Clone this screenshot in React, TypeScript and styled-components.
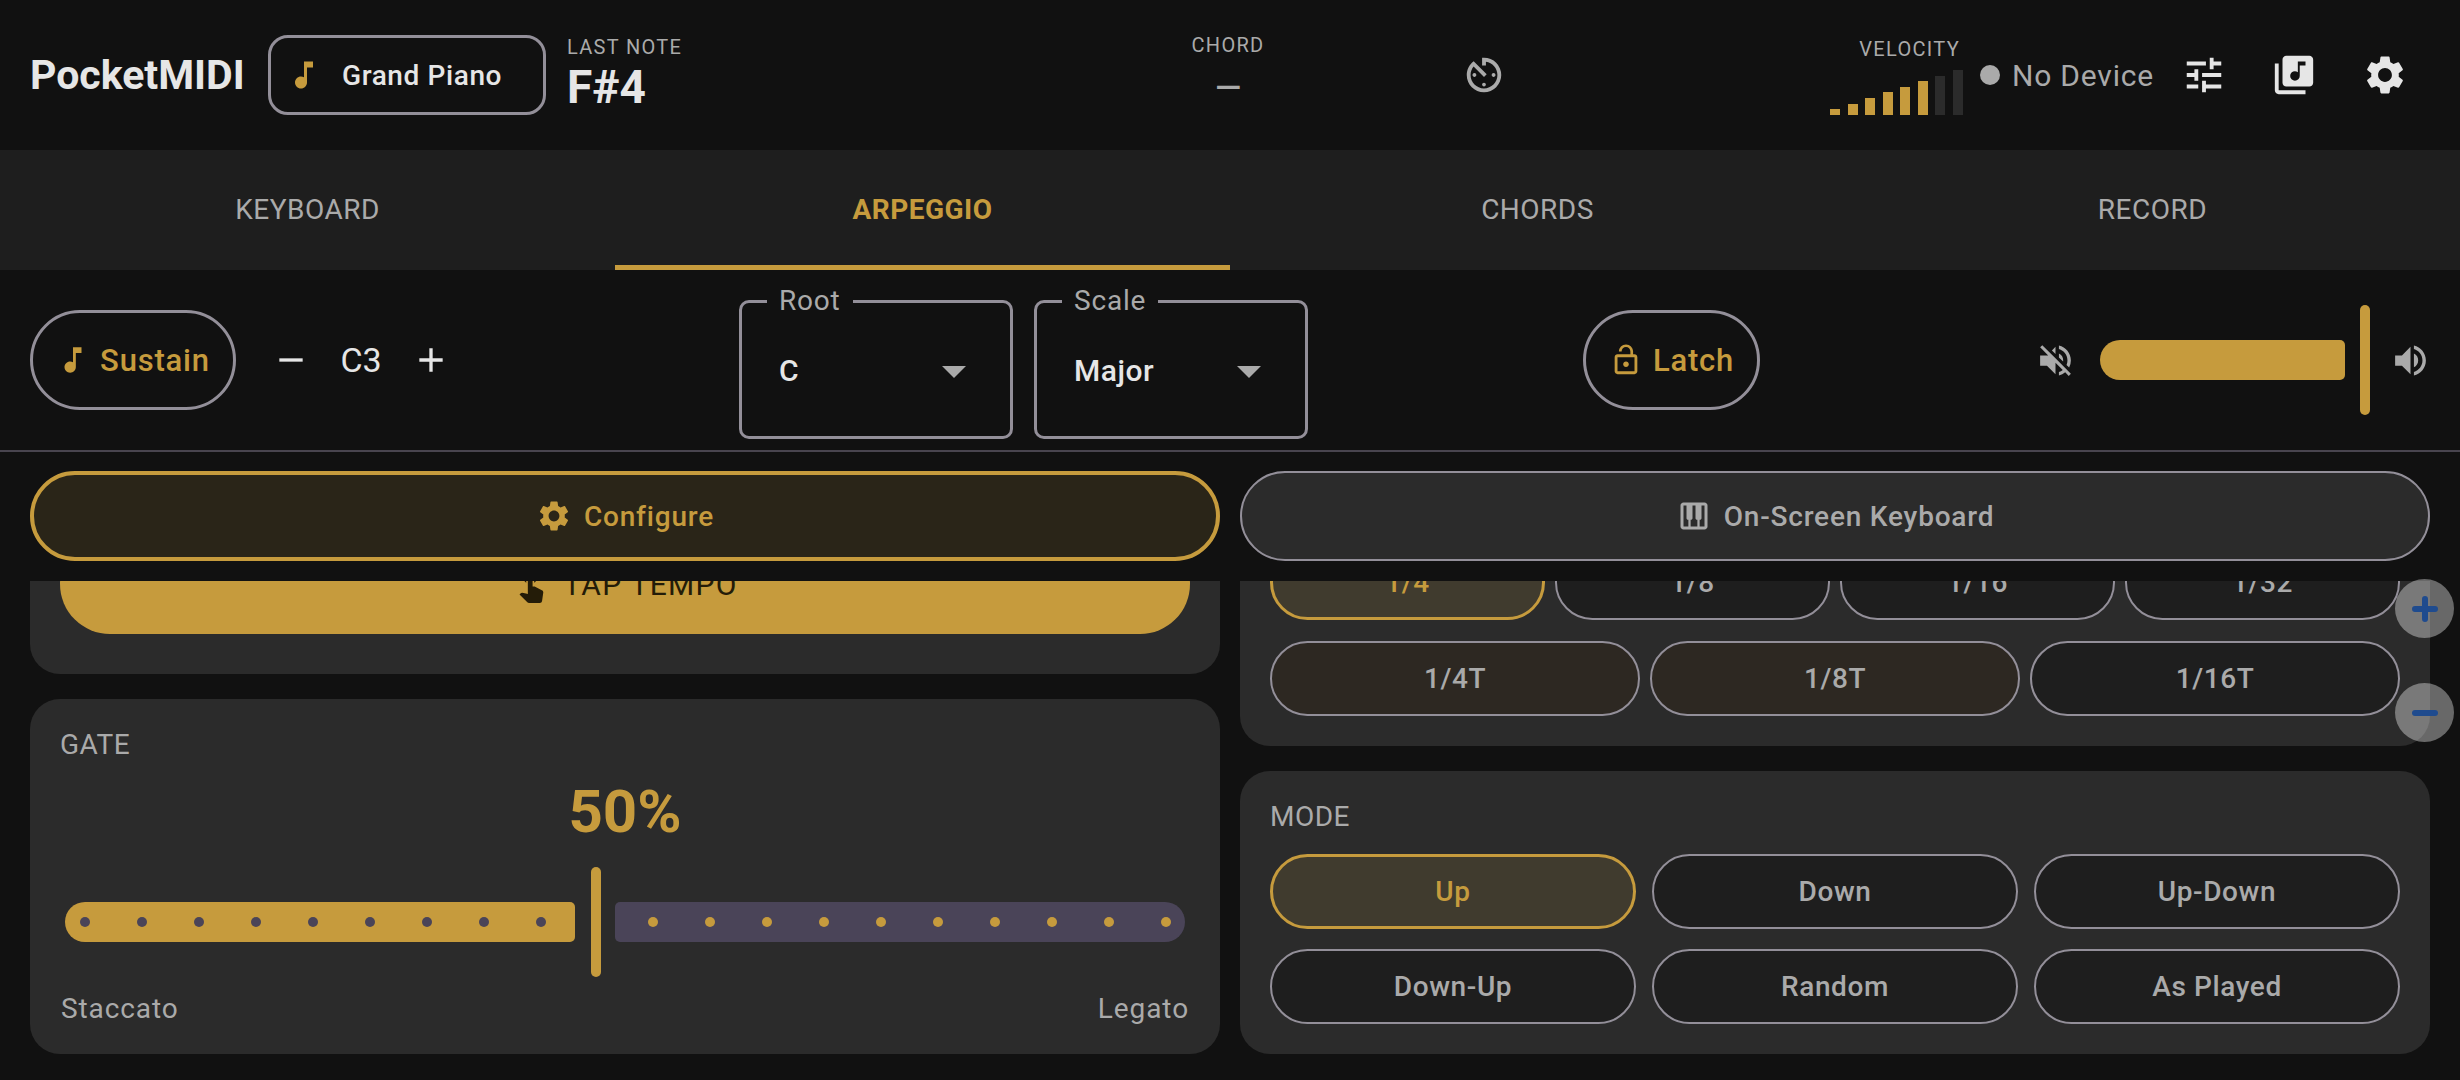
import React from "react";
import styled, { createGlobalStyle } from "styled-components";
import {
  MdAdd, MdAvTimer, MdLibraryMusic, MdLockOpen, MdMusicNote, MdPiano, MdRemove,
  MdSettings, MdTouchApp, MdTune, MdVolumeOff, MdVolumeUp,
} from "react-icons/md";

const gold = "#c69b3d";
const muted = "#aaaaaa";
const light = "#e6e6e6";
const outline = "#938f99";

const Global = createGlobalStyle`
  * { box-sizing: border-box; }
  html, body { margin: 0; padding: 0; background: #111111; overflow: hidden; }
  body { font-family: Roboto, "Liberation Sans", sans-serif; }
  button { font-family: inherit; padding: 0; margin: 0; cursor: pointer; }
`;

const Page = styled.div`
  position: relative;
  width: 2460px;
  height: 1080px;
  display: flex;
  flex-direction: column;
  overflow: hidden;
  background: #111111;
  color: ${light};
`;

/* ---------- top bar ---------- */
const TopBar = styled.header`
  height: 150px;
  flex: none;
  display: flex;
  align-items: center;
  padding: 0 30px;
`;
const Brand = styled.div`
  width: 210px;
  flex: none;
  font-size: 41px;
  font-weight: 700;
  color: ${light};
  margin-right: 28px;
  white-space: nowrap;
`;
const PresetButton = styled.button`
  width: 278px;
  height: 80px;
  flex: none;
  display: flex;
  align-items: center;
  gap: 20px;
  padding-left: 15px;
  border-radius: 20px;
  border: 3px solid ${outline};
  background: transparent;
  color: ${light};
  font-size: 28px;
  font-weight: 480;
  letter-spacing: 0.6px;
  svg { color: ${gold}; flex: none; }
`;
const NoteReadout = styled.div`
  flex: 0 0 561px;
  margin-left: 21px;
  display: flex;
  flex-direction: column;
  margin-top: -3px;
`;
const MiniLabel = styled.div`
  font-size: 20px;
  line-height: 24px;
  letter-spacing: 1.3px;
  color: ${muted};
  white-space: nowrap;
`;
const VelocityLabel = styled(MiniLabel)`
  margin-right: 2px;
`;
const NoteValue = styled.div`
  font-size: 46px;
  line-height: 50px;
  font-weight: 700;
  color: ${light};
  margin-top: 3px;
`;
const ChordReadout = styled.div`
  flex: 0 0 200px;
  display: flex;
  flex-direction: column;
  align-items: center;
  margin-top: -7px;
`;
const ChordValue = styled.div`
  font-size: 34px;
  line-height: 46px;
  font-weight: 500;
  color: ${muted};
  margin-top: 7px;
`;
const TimerSlot = styled.div`
  margin-left: 133px;
  color: ${muted};
  display: flex;
`;
const VelocityBlock = styled.div`
  margin-left: 323px;
  width: 132px;
  margin-top: 2px;
  display: flex;
  flex-direction: column;
  align-items: flex-end;
`;
const Bars = styled.div`
  width: 132px;
  height: 45px;
  margin-top: 9px;
  display: flex;
  align-items: flex-end;
  gap: 7.5px;
`;
const Bar = styled.div<{ $on: boolean; $h: number }>`
  width: 10px;
  flex: none;
  height: ${(p) => p.$h}px;
  background: ${(p) => (p.$on ? gold : "#2b2b2b")};
`;
const DeviceStatus = styled.div`
  margin-left: 18px;
  display: flex;
  align-items: center;
  gap: 12px;
  font-size: 30px;
  letter-spacing: 0.8px;
  color: ${muted};
  white-space: nowrap;
`;
const Dot = styled.span`
  width: 20px;
  height: 20px;
  border-radius: 50%;
  background: ${muted};
`;
const IconRow = styled.div`
  margin-left: auto;
  display: flex;
`;
const IconButton = styled.button`
  width: 90.5px;
  height: 90px;
  border: 0;
  background: transparent;
  color: ${light};
  display: flex;
  align-items: center;
  justify-content: center;
`;

/* ---------- tabs ---------- */
const Tabs = styled.nav`
  height: 120px;
  flex: none;
  display: grid;
  grid-template-columns: repeat(4, 1fr);
  background: #1e1e1e;
`;
const Tab = styled.button<{ $active?: boolean }>`
  border: 0;
  background: transparent;
  font-size: 28px;
  letter-spacing: 0.5px;
  font-weight: ${(p) => (p.$active ? 700 : 400)};
  color: ${(p) => (p.$active ? gold : muted)};
  border-bottom: 5px solid ${(p) => (p.$active ? gold : "transparent")};
  padding-top: 3px;
`;

/* ---------- toolbar ---------- */
const Toolbar = styled.section`
  height: 180px;
  flex: none;
  display: flex;
  align-items: center;
  padding: 0 30px;
`;
const PillToggle = styled.button<{ $width: number; $gap: number }>`
  width: ${(p) => p.$width}px;
  height: 100px;
  flex: none;
  border-radius: 50px;
  border: 3px solid ${outline};
  background: transparent;
  color: ${gold};
  font-size: 31px;
  font-weight: 480;
  letter-spacing: 0.8px;
  display: flex;
  align-items: center;
  justify-content: center;
  gap: ${(p) => p.$gap}px;
  svg { flex: none; }
`;
const LatchSlot = styled.div`
  margin-left: 275px;
`;
const Stepper = styled.div`
  margin-left: 35px;
  display: flex;
  align-items: center;
  gap: 20px;
  color: ${light};
`;
const OctaveValue = styled.span`
  width: 60px;
  text-align: center;
  font-size: 34px;
`;
const Fields = styled.div`
  margin-left: 288px;
  margin-top: 10px;
  display: flex;
  gap: 21px;
`;
const Field = styled.fieldset`
  width: 274px;
  height: 148px;
  margin: 0;
  padding: 0;
  border: 3px solid ${outline};
  border-radius: 10px;
`;
const FieldLabel = styled.legend`
  margin-left: 25px;
  padding: 0 12px;
  font-size: 28px;
  letter-spacing: 0.8px;
  line-height: 20px;
  color: ${muted};
`;
const FieldInner = styled.div`
  height: 100%;
  padding: 0 44px 6px 37px;
  display: flex;
  align-items: center;
  justify-content: space-between;
  font-size: 30px;
  font-weight: 480;
  letter-spacing: 0.5px;
  color: ${light};
`;
const Caret = styled.span`
  width: 0;
  height: 0;
  margin-top: 2px;
  border-left: 12.5px solid transparent;
  border-right: 12.5px solid transparent;
  border-top: 12.5px solid ${muted};
`;
const VolumeSlider = styled.div`
  margin-left: 275px;
  display: flex;
  align-items: center;
  color: ${muted};
  svg { flex: none; }
`;
const VolumeTrack = styled.div`
  width: 245px;
  height: 40px;
  margin-left: 24px;
  border-radius: 20px 5px 5px 20px;
  background: ${gold};
`;
const Handle = styled.div`
  width: 10px;
  height: 110px;
  flex: none;
  border-radius: 5px;
  background: ${gold};
`;
const VolumeHandle = styled(Handle)`
  margin: 0 19.5px 0 15px;
`;
const Divider = styled.div`
  height: 2px;
  flex: none;
  background: #49454f;
`;

/* ---------- action row ---------- */
const ActionRow = styled.div`
  flex: none;
  padding: 19px 30px 20px;
  display: grid;
  grid-template-columns: 1fr 1fr;
  gap: 20px;
`;
const ActionButton = styled.button<{ $active?: boolean }>`
  height: 90px;
  border-radius: 45px;
  border: ${(p) => (p.$active ? `4px solid ${gold}` : `2.5px solid ${outline}`)};
  background: ${(p) => (p.$active ? "#2a2518" : "#2b2b2b")};
  color: ${(p) => (p.$active ? gold : muted)};
  font-size: 28px;
  font-weight: 480;
  letter-spacing: 0.8px;
  display: flex;
  align-items: center;
  justify-content: center;
  gap: 12px;
`;

/* ---------- scroll area ---------- */
const ScrollArea = styled.main`
  flex: 1;
  min-height: 0;
  overflow: hidden;
  padding: 0 30px;
  display: grid;
  grid-template-columns: 1fr 1fr;
  gap: 20px;
  align-items: start;
`;
const Column = styled.div`
  display: flex;
  flex-direction: column;
  gap: 25px;
`;
const Panel = styled.section<{ $pull?: number; $foot?: number }>`
  background: #2b2b2b;
  border-radius: 30px;
  padding: 30px;
  padding-bottom: ${(p) => p.$foot ?? 30}px;
  margin-top: ${(p) => (p.$pull ? -p.$pull : 0)}px;
`;
const TapButton = styled.button`
  width: 100%;
  height: 100px;
  border: 0;
  border-radius: 50px;
  background: ${gold};
  color: #241c08;
  font-size: 30px;
  font-weight: 400;
  letter-spacing: 1.3px;
  display: flex;
  align-items: center;
  justify-content: center;
  gap: 13px;
`;
const SectionLabel = styled.div`
  font-size: 28px;
  line-height: 32px;
  letter-spacing: 0.5px;
  color: ${muted};
`;
const GateValue = styled.div`
  text-align: center;
  font-size: 60px;
  line-height: 70px;
  font-weight: 700;
  color: ${gold};
  margin-top: 16px;
`;
const GateSlider = styled.div`
  margin: 20px 4.5px 0 5px;
  height: 110px;
  display: flex;
  align-items: center;
`;
const GateTrack = styled.div<{ $side: "left" | "right" }>`
  height: 40px;
  flex: none;
  width: ${(p) => (p.$side === "left" ? 510 : 570)}px;
  display: flex;
  align-items: center;
  gap: 47px;
  padding-left: ${(p) => (p.$side === "left" ? 15 : 33)}px;
  background: ${(p) => (p.$side === "left" ? gold : "#4a4458")};
  border-radius: ${(p) => (p.$side === "left" ? "20px 5px 5px 20px" : "5px 20px 20px 5px")};
`;
const Tick = styled.span<{ $color: string }>`
  width: 10px;
  height: 10px;
  flex: none;
  border-radius: 50%;
  background: ${(p) => p.$color};
`;
const GateHandle = styled(Handle)`
  margin: 0 14px 0 16px;
`;
const GateEnds = styled.div`
  display: flex;
  justify-content: space-between;
  margin: 16px 1px 0 1px;
  font-size: 28px;
  line-height: 32px;
  letter-spacing: 0.9px;
  color: ${muted};
`;
const ChipGrid = styled.div<{ $cols: number; $gap: number }>`
  display: grid;
  grid-template-columns: repeat(${(p) => p.$cols}, 1fr);
  column-gap: ${(p) => p.$gap}px;
  row-gap: 20.5px;
`;
const ChipStack = styled.div`
  display: flex;
  flex-direction: column;
  gap: 20.5px;
`;
const ModeGrid = styled(ChipGrid)`
  margin-top: 21px;
`;
const Chip = styled.button<{ $variant?: "on" | "tint" }>`
  height: 75px;
  border-radius: 37.5px;
  border: ${(p) => (p.$variant === "on" ? `3px solid ${gold}` : `2.5px solid ${outline}`)};
  background: ${(p) => (p.$variant === "on" ? "#403b2e" : p.$variant === "tint" ? "#2d2822" : "#1e1e1e")};
  color: ${(p) => (p.$variant === "on" ? gold : muted)};
  font-size: 28px;
  font-weight: 480;
  letter-spacing: 0.6px;
  display: flex;
  align-items: center;
  justify-content: center;
`;

/* ---------- floating zoom buttons ---------- */
const ZoomFab = styled.button<{ $top: number }>`
  position: absolute;
  left: 2395px;
  top: ${(p) => p.$top}px;
  width: 59px;
  height: 59px;
  border-radius: 50%;
  border: 0;
  background: rgba(255, 255, 255, 0.37);
  color: #1f4b8e;
  display: flex;
  align-items: center;
  justify-content: center;
`;

const barHeights = [6, 11, 17, 23, 28, 34, 39, 45];

const PlusGlyph = () => (
  <svg width="30" height="30" viewBox="0 0 30 30" fill="none" stroke="currentColor" strokeWidth="6" strokeLinecap="round">
    <path d="M5 15H25M15 5V25" />
  </svg>
);
const MinusGlyph = () => (
  <svg width="30" height="30" viewBox="0 0 30 30" fill="none" stroke="currentColor" strokeWidth="6" strokeLinecap="round">
    <path d="M5 15H25" />
  </svg>
);

export default function App() {
  return (
    <Page>
      <Global />
      <TopBar>
        <Brand>PocketMIDI</Brand>
        <PresetButton>
          <MdMusicNote size={36} />
          Grand Piano
        </PresetButton>
        <NoteReadout>
          <MiniLabel>LAST NOTE</MiniLabel>
          <NoteValue>F#4</NoteValue>
        </NoteReadout>
        <ChordReadout>
          <MiniLabel>CHORD</MiniLabel>
          <ChordValue>—</ChordValue>
        </ChordReadout>
        <TimerSlot>
          <MdAvTimer size={46} />
        </TimerSlot>
        <VelocityBlock>
          <VelocityLabel>VELOCITY</VelocityLabel>
          <Bars>
            {barHeights.map((h, i) => (
              <Bar key={i} $h={h} $on={i < 6} />
            ))}
          </Bars>
        </VelocityBlock>
        <DeviceStatus>
          <Dot />
          No Device
        </DeviceStatus>
        <IconRow>
          <IconButton><MdTune size={46} /></IconButton>
          <IconButton><MdLibraryMusic size={46} /></IconButton>
          <IconButton><MdSettings size={46} /></IconButton>
        </IconRow>
      </TopBar>

      <Tabs>
        <Tab>KEYBOARD</Tab>
        <Tab $active>ARPEGGIO</Tab>
        <Tab>CHORDS</Tab>
        <Tab>RECORD</Tab>
      </Tabs>

      <Toolbar>
        <PillToggle $width={206} $gap={10}>
          <MdMusicNote size={34} />
          Sustain
        </PillToggle>
        <Stepper>
          <MdRemove size={40} />
          <OctaveValue>C3</OctaveValue>
          <MdAdd size={40} />
        </Stepper>
        <Fields>
          <Field>
            <FieldLabel>Root</FieldLabel>
            <FieldInner>C<Caret /></FieldInner>
          </Field>
          <Field>
            <FieldLabel>Scale</FieldLabel>
            <FieldInner>Major<Caret /></FieldInner>
          </Field>
        </Fields>
        <LatchSlot>
          <PillToggle $width={177} $gap={10}>
            <MdLockOpen size={34} />
            Latch
          </PillToggle>
        </LatchSlot>
        <VolumeSlider>
          <MdVolumeOff size={41} />
          <VolumeTrack />
          <VolumeHandle />
          <MdVolumeUp size={41} />
        </VolumeSlider>
      </Toolbar>
      <Divider />

      <ActionRow>
        <ActionButton $active>
          <MdSettings size={36} />
          Configure
        </ActionButton>
        <ActionButton>
          <MdPiano size={36} />
          On-Screen Keyboard
        </ActionButton>
      </ActionRow>

      <ScrollArea>
        <Column>
          <Panel $pull={77} $foot={40}>
            <TapButton>
              <MdTouchApp size={38} />
              TAP TEMPO
            </TapButton>
          </Panel>
          <Panel $foot={29}>
            <SectionLabel>GATE</SectionLabel>
            <GateValue>50%</GateValue>
            <GateSlider>
              <GateTrack $side="left">
                {Array.from({ length: 9 }, (_, i) => <Tick key={i} $color="#4a4458" />)}
              </GateTrack>
              <GateHandle />
              <GateTrack $side="right">
                {Array.from({ length: 10 }, (_, i) => <Tick key={i} $color={gold} />)}
              </GateTrack>
            </GateSlider>
            <GateEnds>
              <span>Staccato</span>
              <span>Legato</span>
            </GateEnds>
          </Panel>
        </Column>
        <Column>
          <Panel $pull={66}>
            <ChipStack>
              <ChipGrid $cols={4} $gap={10}>
                <Chip $variant="on">1/4</Chip>
                <Chip>1/8</Chip>
                <Chip>1/16</Chip>
                <Chip>1/32</Chip>
              </ChipGrid>
              <ChipGrid $cols={3} $gap={10}>
                <Chip $variant="tint">1/4T</Chip>
                <Chip $variant="tint">1/8T</Chip>
                <Chip>1/16T</Chip>
              </ChipGrid>
            </ChipStack>
          </Panel>
          <Panel>
            <SectionLabel>MODE</SectionLabel>
            <ModeGrid $cols={3} $gap={16}>
              <Chip $variant="on">Up</Chip>
              <Chip>Down</Chip>
              <Chip>Up-Down</Chip>
              <Chip>Down-Up</Chip>
              <Chip>Random</Chip>
              <Chip>As Played</Chip>
            </ModeGrid>
          </Panel>
        </Column>
      </ScrollArea>

      <ZoomFab $top={579}><PlusGlyph /></ZoomFab>
      <ZoomFab $top={683}><MinusGlyph /></ZoomFab>
    </Page>
  );
}
